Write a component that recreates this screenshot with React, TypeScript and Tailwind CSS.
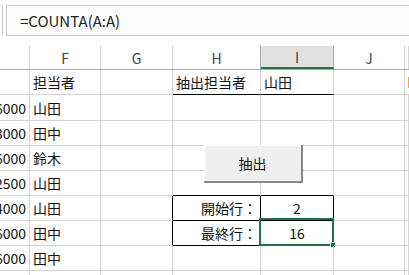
import type { ReactNode } from "react";

// column widths include the 1px right gridline
const COL_W = ["w-[30px]", "w-[71px]", "w-[72px]", "w-[88px]", "w-[73px]", "w-[71px]", "flex-1"];
const HEADERS = ["", "F", "G", "H", "I", "J", ""];

type CellDef = {
  text?: ReactNode;
  align?: "left" | "right" | "center";
  right?: string;
  bottom?: string;
  selected?: boolean;
};

type RowDef = { h: string; cells: CellDef[] };

const BLACK_B = "border-b-black";
const BLACK_R = "border-r-black";

const ROWS: RowDef[] = [
  {
    h: "h-[25px]",
    cells: [
      {},
      { text: "担当者" },
      {},
      { text: "抽出担当者", bottom: BLACK_B },
      { text: "山田", bottom: BLACK_B },
      {},
      { text: <span className="block h-[11px] w-[2px] bg-[#f5a623]" /> },
    ],
  },
  { h: "h-[26px]", cells: [{ text: "6000", align: "right" }, { text: "山田" }, {}, {}, {}, {}, {}] },
  { h: "h-[25px]", cells: [{ text: "3000", align: "right" }, { text: "田中" }, {}, {}, {}, {}, {}] },
  { h: "h-[25px]", cells: [{ text: "6000", align: "right" }, { text: "鈴木" }, {}, {}, {}, {}, {}] },
  {
    h: "h-[25px]",
    cells: [
      { text: "2500", align: "right" },
      { text: "山田" },
      {},
      { bottom: BLACK_B },
      { bottom: BLACK_B },
      {},
      {},
    ],
  },
  {
    h: "h-[25px]",
    cells: [
      { text: "4000", align: "right" },
      { text: "山田" },
      { right: BLACK_R },
      { text: "開始行：", align: "right", right: BLACK_R, bottom: BLACK_B },
      { text: "2", align: "center", right: BLACK_R, bottom: BLACK_B },
      {},
      {},
    ],
  },
  {
    h: "h-[25px]",
    cells: [
      { text: "6000", align: "right" },
      { text: "田中" },
      { right: BLACK_R },
      { text: "最終行：", align: "right", right: BLACK_R, bottom: BLACK_B },
      { text: "16", align: "center", right: BLACK_R, bottom: BLACK_B, selected: true },
      {},
      {},
    ],
  },
  { h: "h-[25px]", cells: [{ text: "6000", align: "right" }, { text: "田中" }, {}, {}, {}, {}, {}] },
  { h: "h-[25px]", cells: [{}, {}, {}, {}, {}, {}, {}] },
];

function Cell({ def, w }: { def: CellDef; w: string }) {
  const justify =
    def.align === "right" ? "justify-end pr-[3px]" : def.align === "center" ? "justify-center" : "justify-start pl-[3px]";
  return (
    <div
      className={`relative flex shrink-0 items-center whitespace-nowrap border-r border-b border-[#d4d4d4] ${w} ${justify} ${def.right ?? ""} ${def.bottom ?? ""}`}
    >
      {def.text}
      {def.selected ? (
        <div className="pointer-events-none absolute -top-[3px] -left-[2px] -right-[1px] -bottom-[1px] border-2 border-[#217346]">
          <div className="absolute -right-[4px] -bottom-[4px] h-[6px] w-[6px] border border-white bg-[#217346]" />
        </div>
      ) : null}
    </div>
  );
}

export default function App() {
  return (
    <div className="h-[275px] w-[409px] overflow-hidden bg-white font-['Noto_Sans_CJK_JP',sans-serif] text-[14px] leading-none text-[#111]">
      {/* formula bar */}
      <div className="flex h-[46px] items-start pt-[5px]">
        <div className="h-[31px] w-[3px] border-r border-[#c6c6c6]" />
        <div className="ml-[3px] flex h-[31px] flex-1 items-center border border-r-0 border-[#c6c6c6] bg-[#fdfdfd] pl-[13px] text-[15px] text-[#222]">
          =COUNTA(A:A)
        </div>
      </div>

      <div className="relative">
        {/* column headers */}
        <div className="flex h-[24px] border-b border-[#ababab] text-[#444]">
          {HEADERS.map((h, i) => (
            <div
              key={i}
              className={`flex shrink-0 items-center justify-center border-r border-[#d4d4d4] ${COL_W[i]} ${
                h === "I" ? "border-b-2 border-b-[#217346] bg-[#e1e1e1] border-r-[#ababab]" : ""
              } ${h === "H" ? "border-r-[#ababab]" : ""}`}
            >
              {h}
            </div>
          ))}
        </div>

        {ROWS.map((row, r) => (
          <div key={r} className={`flex ${row.h}`}>
            {row.cells.map((c, i) => (
              <Cell key={i} def={c} w={COL_W[i]} />
            ))}
          </div>
        ))}

        {/* 抽出 button */}
        <button
          type="button"
          className="absolute top-[99px] left-[204px] flex h-[38px] w-[99px] items-center justify-center border-r-2 border-b-2 border-[#8a8a8a] bg-[#efefef] text-[14px] text-[#111] shadow-[inset_1px_1px_0_#ffffff]"
        >
          抽出
        </button>
      </div>
    </div>
  );
}
